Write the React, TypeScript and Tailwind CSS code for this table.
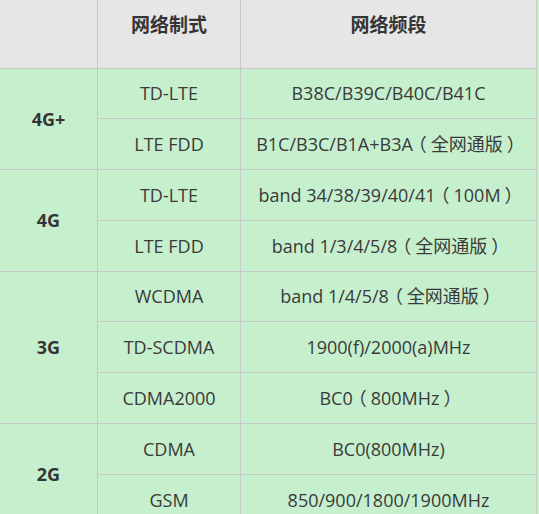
import React from "react";

const font = { fontFamily: '"Open Sans", "Noto Sans CJK SC", sans-serif' };

function Band({ text }: { text: string }) {
  const parts = text.split(/([（）])/);
  return (
    <>
      {parts.map((p, i) =>
        p === "（" ? (
          <span key={i} className="[font-feature-settings:'halt'] ml-[0.28em] mr-[0.22em]">
            {p}
          </span>
        ) : p === "）" ? (
          <span key={i} className="[font-feature-settings:'halt'] ml-[0.22em] mr-[0.28em]">
            {p}
          </span>
        ) : (
          <span key={i}>{p}</span>
        )
      )}
    </>
  );
}

const groupCls =
  "bg-[#c6efce] flex items-center justify-center font-bold text-[18px] text-[#353535]";
const cellCls =
  "bg-[#c6efce] flex items-center justify-center text-[18px] text-[#3a3a3a] whitespace-nowrap";
const headCls =
  "bg-[#e6e6e6] flex justify-center pt-[11px] font-bold text-[19px] text-[#353535]";

export default function App() {
  return (
    <div className="w-[539px] h-[514px] overflow-hidden bg-[#c6efce]" style={font}>
      <div className="w-[537px] bg-[#c8c8c8] pr-px">
        <div className="grid grid-cols-[97px_142px_295px] grid-rows-[68px_49px_50px_50px_50px_49px_50px_50px_50px_50px] gap-px">
          <div className="bg-[#e6e6e6]" />
          <div className={headCls}>网络制式</div>
          <div className={headCls}>网络频段</div>

          <div className={`${groupCls} row-span-2`}>4G+</div>
          <div className={cellCls}>TD-LTE</div>
          <div className={cellCls}>
            <Band text="B38C/B39C/B40C/B41C" />
          </div>
          <div className={cellCls}>LTE FDD</div>
          <div className={cellCls}>
            <Band text="B1C/B3C/B1A+B3A（全网通版）" />
          </div>

          <div className={`${groupCls} row-span-2`}>4G</div>
          <div className={cellCls}>TD-LTE</div>
          <div className={cellCls}>
            <Band text="band 34/38/39/40/41（100M）" />
          </div>
          <div className={cellCls}>LTE FDD</div>
          <div className={cellCls}>
            <Band text="band 1/3/4/5/8（全网通版）" />
          </div>

          <div className={`${groupCls} row-span-3`}>3G</div>
          <div className={cellCls}>WCDMA</div>
          <div className={cellCls}>
            <Band text="band 1/4/5/8（全网通版）" />
          </div>
          <div className={cellCls}>TD-SCDMA</div>
          <div className={cellCls}>
            <Band text="1900(f)/2000(a)MHz" />
          </div>
          <div className={cellCls}>CDMA2000</div>
          <div className={cellCls}>
            <Band text="BC0（800MHz）" />
          </div>

          <div className={`${groupCls} row-span-2`}>2G</div>
          <div className={cellCls}>CDMA</div>
          <div className={cellCls}>
            <Band text="BC0(800MHz)" />
          </div>
          <div className={cellCls}>GSM</div>
          <div className={cellCls}>
            <Band text="850/900/1800/1900MHz" />
          </div>
        </div>
      </div>
    </div>
  );
}
